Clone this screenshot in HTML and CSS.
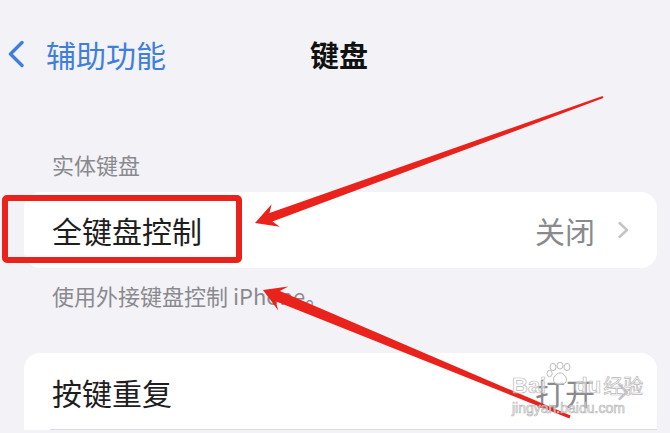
FILE: index.html
```html
<!DOCTYPE html>
<html lang="zh-CN">
<head>
  <meta charset="UTF-8">
  <title>键盘</title>
  <link rel="stylesheet" href="styles.css">
</head>
<body>
  <div class="screen">
    <div class="nav">
      <div class="back">
        <svg width="16" height="28" viewBox="0 0 16 28"><polyline points="14,2.5 2.5,14 14,25.5" fill="none" stroke="#3f7fd9" stroke-width="3.4" stroke-linecap="round" stroke-linejoin="round"/></svg>
        <span>辅助功能</span>
      </div>
      <div class="title">键盘</div>
      <div></div>
    </div>

    <div class="group-head">实体键盘</div>
    <div class="card">
      <div class="row">
        <span class="label">全键盘控制</span>
        <span class="value">关闭</span>
        <svg class="chev" width="12" height="18" viewBox="0 0 12 18"><polyline points="2.5,2 10,9 2.5,16" fill="none" stroke="#c4c4c8" stroke-width="2.4" stroke-linecap="round" stroke-linejoin="round"/></svg>
      </div>
    </div>
    <div class="group-foot">使用外接键盘控制 iPhone。</div>

    <div class="card card-second">
      <div class="row row-line">
        <span class="label">按键重复</span>
        <span class="value">打开</span>
        <svg class="chev" width="12" height="18" viewBox="0 0 12 18"><polyline points="2.5,2 10,9 2.5,16" fill="none" stroke="#c4c4c8" stroke-width="2.4" stroke-linecap="round" stroke-linejoin="round"/></svg>
      </div>
    </div>

    <!-- annotations drawn over the screenshot -->
    <div class="mark-box"></div>
    <svg class="arrows" width="670" height="433" viewBox="0 0 670 433">
      <polygon fill="#e9231c" points="602.6,95.9 269.5,213.0 271.6,204.2 255,223 279.8,226.8 272.5,221.4 603.4,98.1"/>
      <polygon fill="#e9231c" points="570.6,415.6 279.9,291.0 288.3,286.4 263,290 278.3,310.4 275.7,301.2 569.4,418.4"/>
    </svg>

    <div class="watermark">
      <div class="wm-top">
        <span class="wm-en">Bai</span>
        <svg class="paw" width="28" height="24" viewBox="0 0 28 24">
          <g fill="rgba(255,255,255,0.7)" stroke="#bcbcbc" stroke-width="1">
            <ellipse cx="7" cy="5" rx="3" ry="3.6"/>
            <ellipse cx="14" cy="3.6" rx="3" ry="3.4"/>
            <ellipse cx="21" cy="5" rx="3" ry="3.6"/>
            <ellipse cx="3.6" cy="11.5" rx="2.6" ry="3.2"/>
            <path d="M8 20 C6 16 10 11 14 11 C18 11 22 16 20 20 C18 23 10 23 8 20 Z"/>
          </g>
        </svg>
        <span class="wm-en">du</span>
        <span class="wm-cn">经验</span>
      </div>
      <div class="wm-url">jingyan.baidu.com</div>
    </div>
  </div>
</body>
</html>
```

FILE: styles.css
```css
body { margin: 0; background: #f2f2f7; font-family: "Noto Sans CJK SC", "Noto Sans", sans-serif; }
.screen { position: relative; width: 670px; height: 433px; overflow: hidden; }

.nav { display: grid; grid-template-columns: 1fr auto 1fr; align-items: center; padding-top: 36px; height: 36px; }
.back { display: flex; align-items: center; gap: 22px; padding-left: 8px; color: #3f7fd9; font-size: 30px; line-height: 36px; }
.back svg { display: block; }
.title { font-size: 29px; font-weight: bold; color: #111; line-height: 36px; padding-left: 8px; }

.group-head { margin: 79px 0 0 52px; font-size: 22px; line-height: 26px; color: #8a8a8e; }
.group-foot { margin: 14px 0 0 52px; font-size: 22px; line-height: 26px; color: #8a8a8e; }

.card { margin: 15px 13px 0 24px; background: #fff; border-radius: 16px; }
.card-second { margin-top: 45px; border-radius: 16px 16px 0 0; }
.row { position: relative; display: flex; align-items: center; height: 76px; padding: 0 28px 0 28px; }
.row-line { height: 77px; }
.row-line::after { content: ""; position: absolute; left: 26px; right: 0; bottom: 0; height: 1px; background: #dcdce0; }
.label { flex: 1; font-size: 30px; color: #1e1e1e; }
.value { font-size: 30px; color: #8a8a8e; margin-right: 22px; }
.chev { display: block; }

.mark-box { position: absolute; left: 2px; top: 195px; width: 228px; height: 56px; border: 6px solid #e9231c; border-radius: 5px; }
.arrows { position: absolute; left: 0; top: 0; }

.watermark { position: absolute; left: 512px; top: 362px; color: rgba(255,255,255,0.55); -webkit-text-stroke: 0.7px #b8b8b8; font-family: "Liberation Sans", sans-serif; }
.wm-top { display: flex; align-items: flex-end; height: 36px; }
.wm-en { font-size: 22px; font-weight: bold; line-height: 24px; }
.paw { display: block; margin-bottom: 12px; }
.wm-cn { font-family: "Noto Sans CJK SC", sans-serif; font-size: 20px; line-height: 24px; margin-left: 2px; }
.wm-url { font-size: 14px; line-height: 16px; margin-top: 2px; }
```
